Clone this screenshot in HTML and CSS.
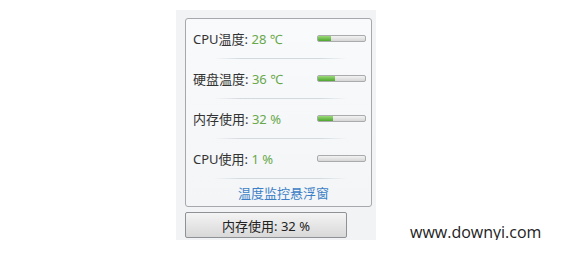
FILE: index.html
```html
<!DOCTYPE html>
<html lang="zh-CN">
<head>
  <meta charset="UTF-8">
  <title>温度监控</title>
  <link rel="stylesheet" href="styles.css">
</head>
<body>
  <div class="page">
    <div class="widget">
      <div class="panel">
        <div class="row">
          <span class="label">CPU温度: <span class="value">28 ℃</span></span>
          <div class="bar"><div class="fill" style="width: 28%"></div></div>
        </div>
        <div class="row">
          <span class="label">硬盘温度: <span class="value">36 ℃</span></span>
          <div class="bar"><div class="fill" style="width: 36%"></div></div>
        </div>
        <div class="row">
          <span class="label">内存使用: <span class="value">32 %</span></span>
          <div class="bar"><div class="fill" style="width: 32%"></div></div>
        </div>
        <div class="row">
          <span class="label">CPU使用: <span class="value">1 %</span></span>
          <div class="bar"><div class="fill" style="width: 1%"></div></div>
        </div>
        <a href="#" class="float-link">温度监控悬浮窗</a>
      </div>
      <button class="mem-button">内存使用: 32 %</button>
    </div>
    <div class="site">www.downyi.com</div>
  </div>
</body>
</html>
```
FILE: styles.css
```css
body {
  margin: 0;
  background: #fff;
  font-family: "Noto Sans", "Noto Sans CJK SC", sans-serif;
  font-size: 13px;
  color: #333;
}

.page {
  display: flex;
  align-items: flex-end;
  padding: 10px 0 0 176px;
}

.widget {
  width: 200px;
  height: 230px;
  box-sizing: border-box;
  padding: 8px 0 0 9px;
  background: #f2f3f4;
}

.panel {
  width: 187px;
  height: 189px;
  box-sizing: border-box;
  border: 1px solid #a5a8ac;
  border-radius: 3px;
  background: linear-gradient(#f9fafb, #f3f5f7);
  display: flex;
  flex-direction: column;
}

.row {
  height: 39px;
  display: flex;
  align-items: center;
  justify-content: space-between;
  padding: 0 5px 0 7px;
  position: relative;
}

.row::after {
  content: "";
  position: absolute;
  left: 28px;
  right: 24px;
  bottom: -1px;
  height: 1px;
  background: linear-gradient(to right, rgba(210, 216, 222, 0), #d3d9df 20%, #d3d9df 80%, rgba(210, 216, 222, 0));
}

.row + .row {
  margin-top: 1px;
}

.label {
  white-space: nowrap;
}

.value {
  color: #68a84a;
}

.bar {
  width: 49px;
  height: 7px;
  box-sizing: border-box;
  border: 1px solid #a9abad;
  border-radius: 2px;
  background: linear-gradient(#f2f2f2, #d6d6d6);
  overflow: hidden;
}

.fill {
  height: 100%;
  background: linear-gradient(#9bd978, #4ea62e);
}

.float-link {
  margin-top: 1px;
  flex: 1;
  display: flex;
  align-items: center;
  justify-content: center;
  color: #3d7fc6;
  text-decoration: none;
  padding-left: 10px;
}

.mem-button {
  margin-top: 5px;
  width: 162px;
  height: 26px;
  border: 1px solid #8e9196;
  border-radius: 2px;
  background: linear-gradient(#f4f4f4, #e6e6e6 50%, #d8d8d8);
  font-family: inherit;
  font-size: 13px;
  color: #222;
  padding: 0;
}

.site {
  margin: 0 0 -2px 34px;
  font-family: "Open Sans", "Noto Sans", sans-serif;
  font-size: 16px;
  color: #222;
  line-height: 20px;
}
```
